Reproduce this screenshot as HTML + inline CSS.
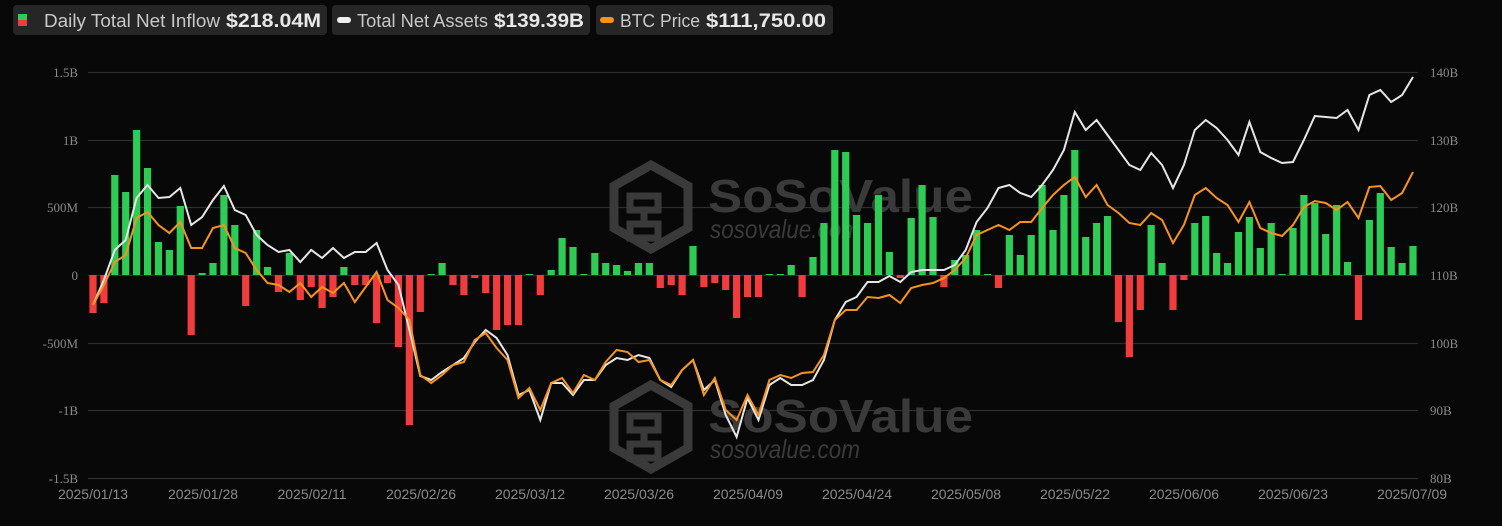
<!DOCTYPE html>
<html><head><meta charset="utf-8"><style>
html,body{margin:0;padding:0;background:#080808;width:1502px;height:526px;overflow:hidden}
svg{display:block}
</style></head><body>
<svg width="1502" height="526" viewBox="0 0 1502 526" xmlns="http://www.w3.org/2000/svg">
<rect width="1502" height="526" fill="#080808"/>
<!-- legend -->
<rect x="13" y="5" width="314" height="30" rx="4" fill="#262626"/>
<rect x="18" y="14" width="9" height="6" fill="#2ecc55"/><rect x="18" y="20" width="9" height="6" fill="#f03c3c"/>
<text x="44" y="27" font-family="Liberation Sans, sans-serif" font-size="18" fill="#c8c8c8" textLength="176" lengthAdjust="spacingAndGlyphs">Daily Total Net Inflow</text>
<text x="226" y="27" font-family="Liberation Sans, sans-serif" font-size="19" font-weight="bold" fill="#e8e8e8" textLength="95" lengthAdjust="spacingAndGlyphs">$218.04M</text>
<rect x="332" y="5" width="258" height="30" rx="4" fill="#262626"/>
<rect x="337" y="17" width="14" height="6" rx="3" fill="#eeeeee"/>
<text x="357" y="27" font-family="Liberation Sans, sans-serif" font-size="18" fill="#c8c8c8" textLength="131" lengthAdjust="spacingAndGlyphs">Total Net Assets</text>
<text x="494" y="27" font-family="Liberation Sans, sans-serif" font-size="19" font-weight="bold" fill="#e8e8e8" textLength="90" lengthAdjust="spacingAndGlyphs">$139.39B</text>
<rect x="596" y="5" width="237" height="30" rx="4" fill="#262626"/>
<rect x="600" y="17" width="14" height="6" rx="3" fill="#f7931a"/>
<text x="620" y="27" font-family="Liberation Sans, sans-serif" font-size="18" fill="#c8c8c8" textLength="80" lengthAdjust="spacingAndGlyphs">BTC Price</text>
<text x="706" y="27" font-family="Liberation Sans, sans-serif" font-size="19" font-weight="bold" fill="#e8e8e8" textLength="120" lengthAdjust="spacingAndGlyphs">$111,750.00</text>
<!-- grid -->
<g stroke="#2e2e2e" stroke-width="1.2">
<line x1="88" y1="72.5" x2="1418" y2="72.5"/><line x1="88" y1="140.5" x2="1418" y2="140.5"/>
<line x1="88" y1="207.5" x2="1418" y2="207.5"/><line x1="88" y1="275.5" x2="1418" y2="275.5"/>
<line x1="88" y1="343.5" x2="1418" y2="343.5"/><line x1="88" y1="410.5" x2="1418" y2="410.5"/>
<line x1="88" y1="478.5" x2="1418" y2="478.5"/>
</g>
<g font-family="Liberation Serif, serif" font-size="13" fill="#8a8a8a" text-anchor="end">
<text x="78" y="77">1.5B</text><text x="78" y="145">1B</text><text x="78" y="212">500M</text><text x="78" y="280">0</text>
<text x="78" y="348">-500M</text><text x="78" y="415">-1B</text><text x="78" y="483">-1.5B</text>
</g>
<g font-family="Liberation Serif, serif" font-size="13" fill="#8a8a8a">
<text x="1430" y="77">140B</text><text x="1430" y="145">130B</text><text x="1430" y="212">120B</text><text x="1430" y="280">110B</text>
<text x="1430" y="348">100B</text><text x="1430" y="415">90B</text><text x="1430" y="483">80B</text>
</g>
<g font-family="Liberation Sans, sans-serif" font-size="14" fill="#8a8a8a" text-anchor="middle">
<text x="93" y="499">2025/01/13</text><text x="203" y="499">2025/01/28</text><text x="312" y="499">2025/02/11</text>
<text x="421" y="499">2025/02/26</text><text x="530" y="499">2025/03/12</text><text x="639" y="499">2025/03/26</text>
<text x="748" y="499">2025/04/09</text><text x="857" y="499">2025/04/24</text><text x="966" y="499">2025/05/08</text>
<text x="1075" y="499">2025/05/22</text><text x="1184" y="499">2025/06/06</text><text x="1293" y="499">2025/06/23</text>
<text x="1412" y="499">2025/07/09</text>
</g>
<!-- watermarks -->
<g id="wm" fill="#3a3a3a">
<polygon points="651,165 688,186 688,228 651,249 614,228 614,186" fill="none" stroke="#3a3a3a" stroke-width="9"/>
<path d="M630,196 h28 v14 h-14 v14 h14 v14 h-28 v-14 h14 v-14 h-14z" fill="none" stroke="#3a3a3a" stroke-width="7"/>
<text x="708" y="212" font-family="Liberation Sans, sans-serif" font-weight="bold" font-size="46" textLength="265" lengthAdjust="spacingAndGlyphs">SoSoValue</text>
<text x="710" y="238" font-family="Liberation Sans, sans-serif" font-style="italic" font-size="26" textLength="150" lengthAdjust="spacingAndGlyphs">sosovalue.com</text>
</g>
<use href="#wm" y="220"/>
<g id="bars"></g>
<polyline id="wl" fill="none" stroke="#e6e6e6" stroke-width="2"/>
<polyline id="ol" fill="none" stroke="#f7931a" stroke-width="2"/>
</svg>
<script>
var h=[-38,-28,100,83,145,107,33,25,69,-60,2,12,80,50,-31,45,8,-17,22,-25,-12,-33,-22,8,-10,-10,-48,-8,-72,-150,-37,0,12,-10,-20,-3,-18,-55,-50,-50,0,-20,5,37,28,0,22,12,10,4,12,12,-13,-10,-20,29,-12,-8,-15,-43,-22,-22,0,0,10,-22,18,52,125,123,60,52,80,23,-3,57,90,58,-12,15,20,45,0,-13,40,20,40,90,45,80,125,38,52,59,-47,-82,-35,50,12,-35,-5,52,59,22,12,43,58,27,52,0,47,80,72,41,70,13,-45,55,82,28,12,29];
var n=h.length,s=(1413-93)/(n-1),g=document.getElementById('bars'),o='';
for(var i=0;i<n;i++){var x=93+i*s-3.6,v=h[i];if(v===0){o+='<rect x="'+x+'" y="274" width="7.2" height="1" fill="#2ecc55"/>';continue;}
o+= v>0?'<rect x="'+x+'" y="'+(275-v)+'" width="7.2" height="'+v+'" fill="#2ecc55"/>':'<rect x="'+x+'" y="275" width="7.2" height="'+(-v)+'" fill="#f03c3c"/>';}
g.innerHTML=o;
var wy=[305,280,250,240,198,185,198,197,188,225,217,200,186,210,215,235,245,252,250,262,250,258,248,258,252,252,243,270,285,330,376,380,372,365,358,342,330,338,355,395,390,420,383,383,395,380,380,365,358,360,355,358,380,387,370,360,390,380,415,437,398,420,385,378,385,385,380,360,320,302,297,282,282,276,282,272,270,270,270,265,250,222,208,188,185,193,197,185,170,150,112,130,120,135,150,165,170,153,165,188,165,130,120,128,140,155,122,152,158,163,162,140,116,117,118,110,130,95,90,102,95,77];
var oy=[305,285,262,255,218,212,225,233,222,248,248,228,225,248,253,270,283,285,292,283,297,287,293,283,302,287,272,300,308,320,375,383,375,365,362,340,333,348,360,398,388,410,383,378,393,375,380,362,350,352,362,360,380,385,370,360,395,378,410,420,395,415,380,375,378,373,372,355,320,310,310,297,298,295,303,288,285,283,278,270,258,235,230,225,230,222,222,208,195,185,177,197,185,205,213,223,225,213,220,243,225,195,188,198,205,222,202,228,233,236,225,207,201,203,210,202,218,187,186,200,193,172];
function pts(a){var m=a.length,st=(1413-93)/(m-1),r=[];for(var i=0;i<m;i++)r.push((93+i*st).toFixed(1)+','+a[i]);return r.join(' ');}
document.getElementById('wl').setAttribute('points',pts(wy));
document.getElementById('ol').setAttribute('points',pts(oy));
</script>
</body></html>
